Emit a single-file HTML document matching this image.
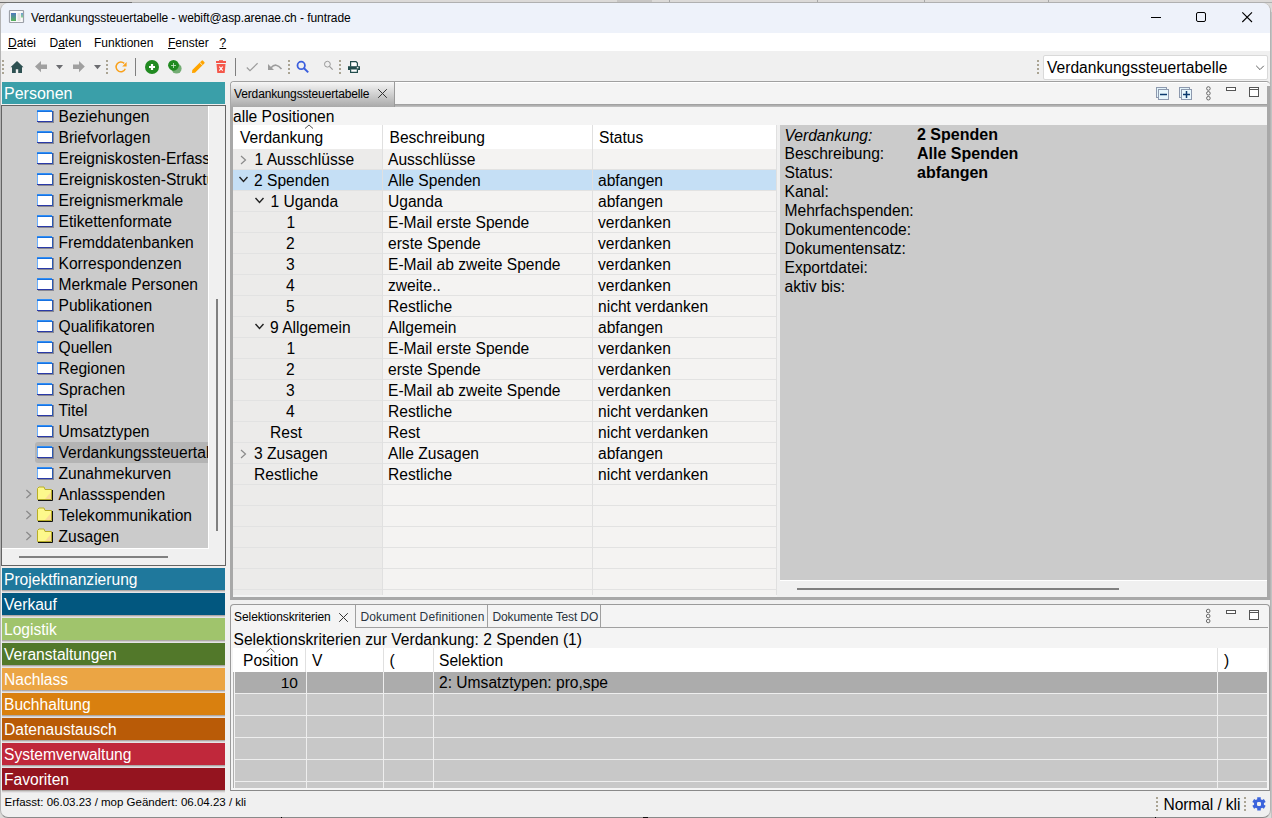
<!DOCTYPE html><html><head><meta charset="utf-8"><title>funtrade</title><style>
*{margin:0;padding:0;box-sizing:border-box}
html,body{width:1272px;height:818px;overflow:hidden;background:#dcdad8;font-family:"Liberation Sans",sans-serif;color:#000}
div,svg{position:absolute}
.t{white-space:pre}
</style></head><body>
<div style="left:0px;top:2px;width:132px;height:1px;background:#707070"></div>
<div style="left:132px;top:2px;width:1140px;height:1px;background:#b0b0b0"></div>
<div style="left:617px;top:0px;width:35px;height:2px;background:#c8c6c4"></div>
<div style="left:669px;top:0px;width:1px;height:2px;background:#a8a8a8"></div>
<div style="left:817px;top:0px;width:1px;height:2px;background:#a8a8a8"></div>
<div style="left:924px;top:0px;width:1px;height:2px;background:#a8a8a8"></div>
<div style="left:1048px;top:0px;width:1px;height:2px;background:#a8a8a8"></div>
<div style="left:0px;top:3px;width:1271px;height:815px;background:#f0f0f0;border:1px solid #b4b4b4;border-bottom-color:#8a8a8a;border-top:0;border-radius:8px;overflow:hidden"></div>
<div style="left:1271px;top:12px;width:1px;height:806px;background:#c2c2c2"></div>
<div style="left:281px;top:817px;width:1px;height:1px;background:#000"></div>
<div style="left:643px;top:817px;width:5px;height:1px;background:#111"></div>
<div style="left:1155px;top:817px;width:1px;height:1px;background:#000"></div>
<div style="left:1px;top:3px;width:1269px;height:30px;background:#eef2fa;border-radius:8px 8px 0 0"></div>
<div style="left:1px;top:33px;width:1269px;height:18px;background:#ffffff"></div>
<div style="left:2px;top:82px;width:223px;height:22px;background:#3a9fa9"></div>
<div style="left:1px;top:105px;width:225px;height:461px;background:#f0f0f0;border:1px solid #646464"></div>
<div style="left:2px;top:106px;width:206px;height:442px;background:#cbcbcb"></div>
<div style="left:208px;top:106px;width:1px;height:443px;background:#ffffff"></div>
<div style="left:2px;top:548px;width:206px;height:1px;background:#ffffff"></div>
<div style="left:216px;top:299px;width:2px;height:232px;background:#808080"></div>
<div style="left:19px;top:556px;width:149px;height:2px;background:#808080"></div>
<div style="left:2px;top:566px;width:223px;height:225px;background:#f2eeec"></div>
<div style="left:2px;top:568px;width:223px;height:22px;background:#1f789c"></div>
<div style="left:2px;top:590px;width:223px;height:1px;background:#afa9a7"></div>
<div style="left:2px;top:591px;width:223px;height:1px;background:#d0cecd"></div>
<div style="left:2px;top:592px;width:223px;height:1px;background:#e5e3e6"></div>
<div style="left:2px;top:593px;width:223px;height:22px;background:#02577f"></div>
<div style="left:2px;top:615px;width:223px;height:1px;background:#afa9a7"></div>
<div style="left:2px;top:616px;width:223px;height:1px;background:#d0cecd"></div>
<div style="left:2px;top:617px;width:223px;height:1px;background:#e5e3e6"></div>
<div style="left:2px;top:618px;width:223px;height:22px;background:#a0c46c"></div>
<div style="left:2px;top:640px;width:223px;height:1px;background:#afa9a7"></div>
<div style="left:2px;top:641px;width:223px;height:1px;background:#d0cecd"></div>
<div style="left:2px;top:642px;width:223px;height:1px;background:#e5e3e6"></div>
<div style="left:2px;top:643px;width:223px;height:22px;background:#52782a"></div>
<div style="left:2px;top:665px;width:223px;height:1px;background:#afa9a7"></div>
<div style="left:2px;top:666px;width:223px;height:1px;background:#d0cecd"></div>
<div style="left:2px;top:667px;width:223px;height:1px;background:#e5e3e6"></div>
<div style="left:2px;top:668px;width:223px;height:22px;background:#eba544"></div>
<div style="left:2px;top:690px;width:223px;height:1px;background:#afa9a7"></div>
<div style="left:2px;top:691px;width:223px;height:1px;background:#d0cecd"></div>
<div style="left:2px;top:692px;width:223px;height:1px;background:#e5e3e6"></div>
<div style="left:2px;top:693px;width:223px;height:22px;background:#d9800f"></div>
<div style="left:2px;top:715px;width:223px;height:1px;background:#afa9a7"></div>
<div style="left:2px;top:716px;width:223px;height:1px;background:#d0cecd"></div>
<div style="left:2px;top:717px;width:223px;height:1px;background:#e5e3e6"></div>
<div style="left:2px;top:718px;width:223px;height:22px;background:#b95b07"></div>
<div style="left:2px;top:740px;width:223px;height:1px;background:#afa9a7"></div>
<div style="left:2px;top:741px;width:223px;height:1px;background:#d0cecd"></div>
<div style="left:2px;top:742px;width:223px;height:1px;background:#e5e3e6"></div>
<div style="left:2px;top:743px;width:223px;height:22px;background:#c0283b"></div>
<div style="left:2px;top:765px;width:223px;height:1px;background:#afa9a7"></div>
<div style="left:2px;top:766px;width:223px;height:1px;background:#d0cecd"></div>
<div style="left:2px;top:767px;width:223px;height:1px;background:#e5e3e6"></div>
<div style="left:2px;top:768px;width:223px;height:22px;background:#94141f"></div>
<div style="left:2px;top:790px;width:223px;height:1px;background:#afa9a7"></div>
<div style="left:2px;top:791px;width:223px;height:1px;background:#d0cecd"></div>
<div style="left:2px;top:792px;width:223px;height:1px;background:#e5e3e6"></div>
<div style="left:230px;top:81px;width:1040px;height:519px;background:#f4f4f4;border-top:1px solid #a0a0a0;border-left:1px solid #a0a0a0;border-radius:4px 4px 0 0"></div>
<div style="left:230px;top:86px;width:3px;height:514px;background:#a8a8a8"></div>
<div style="left:1267px;top:86px;width:3px;height:514px;background:#a8a8a8"></div>
<div style="left:230px;top:597px;width:1040px;height:3px;background:#a8a8a8"></div>
<div style="left:233px;top:82px;width:1034px;height:1px;background:#ffffff"></div>
<div style="left:394px;top:104px;width:873px;height:3px;background:linear-gradient(#9a9a9a,#c4c4c4)"></div>
<div style="left:231px;top:82px;width:164px;height:25px;background:linear-gradient(#f6f6f6,#a9a9a9);border-right:1px solid #9a9a9a;border-radius:3px 0 0 0"></div>
<div style="left:233px;top:125px;width:543px;height:24px;background:#ffffff"></div>
<div style="left:233px;top:149px;width:149px;height:446px;background:#ecebea"></div>
<div style="left:383px;top:149px;width:393px;height:446px;background:#f4f3f2"></div>
<div style="left:233px;top:170px;width:543px;height:20px;background:#c5dff5"></div>
<div style="left:233px;top:169px;width:543px;height:1px;background:#e2e2e2"></div>
<div style="left:233px;top:190px;width:543px;height:1px;background:#e2e2e2"></div>
<div style="left:233px;top:211px;width:543px;height:1px;background:#e2e2e2"></div>
<div style="left:233px;top:232px;width:543px;height:1px;background:#e2e2e2"></div>
<div style="left:233px;top:253px;width:543px;height:1px;background:#e2e2e2"></div>
<div style="left:233px;top:274px;width:543px;height:1px;background:#e2e2e2"></div>
<div style="left:233px;top:295px;width:543px;height:1px;background:#e2e2e2"></div>
<div style="left:233px;top:316px;width:543px;height:1px;background:#e2e2e2"></div>
<div style="left:233px;top:337px;width:543px;height:1px;background:#e2e2e2"></div>
<div style="left:233px;top:358px;width:543px;height:1px;background:#e2e2e2"></div>
<div style="left:233px;top:379px;width:543px;height:1px;background:#e2e2e2"></div>
<div style="left:233px;top:400px;width:543px;height:1px;background:#e2e2e2"></div>
<div style="left:233px;top:421px;width:543px;height:1px;background:#e2e2e2"></div>
<div style="left:233px;top:442px;width:543px;height:1px;background:#e2e2e2"></div>
<div style="left:233px;top:463px;width:543px;height:1px;background:#e2e2e2"></div>
<div style="left:233px;top:484px;width:543px;height:1px;background:#e2e2e2"></div>
<div style="left:233px;top:505px;width:543px;height:1px;background:#e2e2e2"></div>
<div style="left:233px;top:526px;width:543px;height:1px;background:#e2e2e2"></div>
<div style="left:233px;top:547px;width:543px;height:1px;background:#e2e2e2"></div>
<div style="left:233px;top:568px;width:543px;height:1px;background:#e2e2e2"></div>
<div style="left:233px;top:589px;width:543px;height:1px;background:#e2e2e2"></div>
<div style="left:382px;top:125px;width:1px;height:470px;background:#e0e0e0"></div>
<div style="left:592px;top:125px;width:1px;height:470px;background:#e0e0e0"></div>
<div style="left:776px;top:125px;width:1px;height:470px;background:#e0e0e0"></div>
<div style="left:780px;top:125px;width:487px;height:455px;background:#cbcbcb"></div>
<div style="left:777px;top:125px;width:3px;height:472px;background:#f0f0f0"></div>
<div style="left:777px;top:581px;width:490px;height:16px;background:#f0f0f0"></div>
<div style="left:780px;top:580px;width:487px;height:1px;background:#ffffff"></div>
<div style="left:797px;top:588px;width:322px;height:2px;background:#808080"></div>
<div style="left:230px;top:604px;width:1040px;height:187px;background:#f4f4f4;border:1px solid #9a9a9a;border-bottom:1px solid #8a8a8a;border-radius:4px 4px 0 0"></div>
<div style="left:355px;top:627px;width:913px;height:1px;background:#a0a0a0"></div>
<div style="left:355px;top:605px;width:1px;height:22px;background:#a0a0a0"></div>
<div style="left:487px;top:605px;width:1px;height:22px;background:#a0a0a0"></div>
<div style="left:600px;top:605px;width:1px;height:22px;background:#a0a0a0"></div>
<div style="left:233px;top:648px;width:1034px;height:24px;background:#ffffff"></div>
<div style="left:305px;top:648px;width:1px;height:24px;background:#e0e0e0"></div>
<div style="left:383px;top:648px;width:1px;height:24px;background:#e0e0e0"></div>
<div style="left:433px;top:648px;width:1px;height:24px;background:#e0e0e0"></div>
<div style="left:1217px;top:648px;width:1px;height:24px;background:#e0e0e0"></div>
<div style="left:233px;top:672px;width:1px;height:116px;background:#b0b0b0"></div>
<div style="left:235px;top:672px;width:1032px;height:116px;background:#c8c8c8"></div>
<div style="left:235px;top:672px;width:1032px;height:21px;background:#acacac"></div>
<div style="left:235px;top:693px;width:1032px;height:1px;background:#eeeeee"></div>
<div style="left:235px;top:715px;width:1032px;height:1px;background:#eeeeee"></div>
<div style="left:235px;top:737px;width:1032px;height:1px;background:#eeeeee"></div>
<div style="left:235px;top:759px;width:1032px;height:1px;background:#eeeeee"></div>
<div style="left:235px;top:781px;width:1032px;height:1px;background:#eeeeee"></div>
<div style="left:306px;top:672px;width:1px;height:116px;background:#eeeeee"></div>
<div style="left:383px;top:672px;width:1px;height:116px;background:#eeeeee"></div>
<div style="left:433px;top:672px;width:1px;height:116px;background:#eeeeee"></div>
<div style="left:1217px;top:672px;width:1px;height:116px;background:#eeeeee"></div>
<div class="t" style="left:31px;top:12px;font-size:12px;line-height:12px;letter-spacing:-0.07px">Verdankungssteuertabelle - webift@asp.arenae.ch - funtrade</div>
<div class="t" style="left:8px;top:37px;font-size:12px;line-height:12px;"><u>D</u>atei</div>
<div class="t" style="left:49.5px;top:37px;font-size:12px;line-height:12px;">D<u>a</u>ten</div>
<div class="t" style="left:94px;top:37px;font-size:12px;line-height:12px;">Funktionen</div>
<div class="t" style="left:168px;top:37px;font-size:12px;line-height:12px;"><u>F</u>enster</div>
<div class="t" style="left:219.5px;top:37px;font-size:12px;line-height:12px;"><u>?</u></div>
<div style="left:1043px;top:55px;width:225px;height:25px;background:#fff;border:1px solid #d9d9d9;border-radius:2px"></div>
<div class="t" style="left:1047px;top:60px;font-size:15.6px;line-height:15.6px;">Verdankungssteuertabelle</div>
<div class="t" style="left:4px;top:86px;font-size:16px;line-height:16px;color:#fff">Personen</div>
<div style="left:2px;top:106px;width:206px;height:442px;overflow:hidden">
<div style="left:33px;top:336px;width:180px;height:21px;background:#b4b4b4;border-radius:3px"></div>
<div class="t" style="left:56.5px;top:3px;font-size:15.6px;line-height:15.6px;">Beziehungen</div>
<div class="t" style="left:56.5px;top:24px;font-size:15.6px;line-height:15.6px;">Briefvorlagen</div>
<div class="t" style="left:56.5px;top:45px;font-size:15.6px;line-height:15.6px;">Ereigniskosten-Erfassung</div>
<div class="t" style="left:56.5px;top:66px;font-size:15.6px;line-height:15.6px;">Ereigniskosten-Struktur</div>
<div class="t" style="left:56.5px;top:87px;font-size:15.6px;line-height:15.6px;">Ereignismerkmale</div>
<div class="t" style="left:56.5px;top:108px;font-size:15.6px;line-height:15.6px;">Etikettenformate</div>
<div class="t" style="left:56.5px;top:129px;font-size:15.6px;line-height:15.6px;">Fremddatenbanken</div>
<div class="t" style="left:56.5px;top:150px;font-size:15.6px;line-height:15.6px;">Korrespondenzen</div>
<div class="t" style="left:56.5px;top:171px;font-size:15.6px;line-height:15.6px;">Merkmale Personen</div>
<div class="t" style="left:56.5px;top:192px;font-size:15.6px;line-height:15.6px;">Publikationen</div>
<div class="t" style="left:56.5px;top:213px;font-size:15.6px;line-height:15.6px;">Qualifikatoren</div>
<div class="t" style="left:56.5px;top:234px;font-size:15.6px;line-height:15.6px;">Quellen</div>
<div class="t" style="left:56.5px;top:255px;font-size:15.6px;line-height:15.6px;">Regionen</div>
<div class="t" style="left:56.5px;top:276px;font-size:15.6px;line-height:15.6px;">Sprachen</div>
<div class="t" style="left:56.5px;top:297px;font-size:15.6px;line-height:15.6px;">Titel</div>
<div class="t" style="left:56.5px;top:318px;font-size:15.6px;line-height:15.6px;">Umsatztypen</div>
<div class="t" style="left:56.5px;top:339px;font-size:15.6px;line-height:15.6px;">Verdankungssteuertabelle</div>
<div class="t" style="left:56.5px;top:360px;font-size:15.6px;line-height:15.6px;">Zunahmekurven</div>
<div class="t" style="left:56.5px;top:381px;font-size:15.6px;line-height:15.6px;">Anlassspenden</div>
<div class="t" style="left:56.5px;top:402px;font-size:15.6px;line-height:15.6px;">Telekommunikation</div>
<div class="t" style="left:56.5px;top:423px;font-size:15.6px;line-height:15.6px;">Zusagen</div>
</div>
<div class="t" style="left:4px;top:572px;font-size:15.6px;line-height:15.6px;color:#fff">Projektfinanzierung</div>
<div class="t" style="left:4px;top:597px;font-size:15.6px;line-height:15.6px;color:#fff">Verkauf</div>
<div class="t" style="left:4px;top:622px;font-size:15.6px;line-height:15.6px;color:#fff">Logistik</div>
<div class="t" style="left:4px;top:647px;font-size:15.6px;line-height:15.6px;color:#fff">Veranstaltungen</div>
<div class="t" style="left:4px;top:672px;font-size:15.6px;line-height:15.6px;color:#fff">Nachlass</div>
<div class="t" style="left:4px;top:697px;font-size:15.6px;line-height:15.6px;color:#fff">Buchhaltung</div>
<div class="t" style="left:4px;top:722px;font-size:15.6px;line-height:15.6px;color:#fff">Datenaustausch</div>
<div class="t" style="left:4px;top:747px;font-size:15.6px;line-height:15.6px;color:#fff">Systemverwaltung</div>
<div class="t" style="left:4px;top:772px;font-size:15.6px;line-height:15.6px;color:#fff">Favoriten</div>
<div class="t" style="left:234px;top:88px;font-size:12px;line-height:12px;letter-spacing:-0.14px">Verdankungssteuertabelle</div>
<div class="t" style="left:233px;top:109px;font-size:15.6px;line-height:15.6px;">alle Positionen</div>
<div class="t" style="left:240px;top:130px;font-size:15.6px;line-height:15.6px;">Verdankung</div>
<div class="t" style="left:389.5px;top:130px;font-size:15.6px;line-height:15.6px;">Beschreibung</div>
<div class="t" style="left:599px;top:130px;font-size:15.6px;line-height:15.6px;">Status</div>
<div class="t" style="left:254.5px;top:152px;font-size:15.6px;line-height:15.6px;">1 Ausschlüsse</div>
<div class="t" style="left:388px;top:152px;font-size:15.6px;line-height:15.6px;">Ausschlüsse</div>
<div class="t" style="left:254px;top:173px;font-size:15.6px;line-height:15.6px;">2 Spenden</div>
<div class="t" style="left:388px;top:173px;font-size:15.6px;line-height:15.6px;">Alle Spenden</div>
<div class="t" style="left:598px;top:173px;font-size:15.6px;line-height:15.6px;">abfangen</div>
<div class="t" style="left:270.5px;top:194px;font-size:15.6px;line-height:15.6px;">1 Uganda</div>
<div class="t" style="left:388px;top:194px;font-size:15.6px;line-height:15.6px;">Uganda</div>
<div class="t" style="left:598px;top:194px;font-size:15.6px;line-height:15.6px;">abfangen</div>
<div class="t" style="left:286.5px;top:215px;font-size:15.6px;line-height:15.6px;">1</div>
<div class="t" style="left:388px;top:215px;font-size:15.6px;line-height:15.6px;">E-Mail erste Spende</div>
<div class="t" style="left:598px;top:215px;font-size:15.6px;line-height:15.6px;">verdanken</div>
<div class="t" style="left:286px;top:236px;font-size:15.6px;line-height:15.6px;">2</div>
<div class="t" style="left:388px;top:236px;font-size:15.6px;line-height:15.6px;">erste Spende</div>
<div class="t" style="left:598px;top:236px;font-size:15.6px;line-height:15.6px;">verdanken</div>
<div class="t" style="left:286px;top:257px;font-size:15.6px;line-height:15.6px;">3</div>
<div class="t" style="left:388px;top:257px;font-size:15.6px;line-height:15.6px;">E-Mail ab zweite Spende</div>
<div class="t" style="left:598px;top:257px;font-size:15.6px;line-height:15.6px;">verdanken</div>
<div class="t" style="left:286px;top:278px;font-size:15.6px;line-height:15.6px;">4</div>
<div class="t" style="left:388px;top:278px;font-size:15.6px;line-height:15.6px;">zweite..</div>
<div class="t" style="left:598px;top:278px;font-size:15.6px;line-height:15.6px;">verdanken</div>
<div class="t" style="left:286px;top:299px;font-size:15.6px;line-height:15.6px;">5</div>
<div class="t" style="left:388px;top:299px;font-size:15.6px;line-height:15.6px;">Restliche</div>
<div class="t" style="left:598px;top:299px;font-size:15.6px;line-height:15.6px;">nicht verdanken</div>
<div class="t" style="left:270px;top:320px;font-size:15.6px;line-height:15.6px;">9 Allgemein</div>
<div class="t" style="left:388px;top:320px;font-size:15.6px;line-height:15.6px;">Allgemein</div>
<div class="t" style="left:598px;top:320px;font-size:15.6px;line-height:15.6px;">abfangen</div>
<div class="t" style="left:286.5px;top:341px;font-size:15.6px;line-height:15.6px;">1</div>
<div class="t" style="left:388px;top:341px;font-size:15.6px;line-height:15.6px;">E-Mail erste Spende</div>
<div class="t" style="left:598px;top:341px;font-size:15.6px;line-height:15.6px;">verdanken</div>
<div class="t" style="left:286px;top:362px;font-size:15.6px;line-height:15.6px;">2</div>
<div class="t" style="left:388px;top:362px;font-size:15.6px;line-height:15.6px;">erste Spende</div>
<div class="t" style="left:598px;top:362px;font-size:15.6px;line-height:15.6px;">verdanken</div>
<div class="t" style="left:286px;top:383px;font-size:15.6px;line-height:15.6px;">3</div>
<div class="t" style="left:388px;top:383px;font-size:15.6px;line-height:15.6px;">E-Mail ab zweite Spende</div>
<div class="t" style="left:598px;top:383px;font-size:15.6px;line-height:15.6px;">verdanken</div>
<div class="t" style="left:286px;top:404px;font-size:15.6px;line-height:15.6px;">4</div>
<div class="t" style="left:388px;top:404px;font-size:15.6px;line-height:15.6px;">Restliche</div>
<div class="t" style="left:598px;top:404px;font-size:15.6px;line-height:15.6px;">nicht verdanken</div>
<div class="t" style="left:270px;top:425px;font-size:15.6px;line-height:15.6px;">Rest</div>
<div class="t" style="left:388px;top:425px;font-size:15.6px;line-height:15.6px;">Rest</div>
<div class="t" style="left:598px;top:425px;font-size:15.6px;line-height:15.6px;">nicht verdanken</div>
<div class="t" style="left:254px;top:446px;font-size:15.6px;line-height:15.6px;">3 Zusagen</div>
<div class="t" style="left:388px;top:446px;font-size:15.6px;line-height:15.6px;">Alle Zusagen</div>
<div class="t" style="left:598px;top:446px;font-size:15.6px;line-height:15.6px;">abfangen</div>
<div class="t" style="left:254px;top:467px;font-size:15.6px;line-height:15.6px;">Restliche</div>
<div class="t" style="left:388px;top:467px;font-size:15.6px;line-height:15.6px;">Restliche</div>
<div class="t" style="left:598px;top:467px;font-size:15.6px;line-height:15.6px;">nicht verdanken</div>
<div class="t" style="left:784.5px;top:128px;font-size:15.6px;line-height:15.6px;font-style:italic">Verdankung:</div>
<div class="t" style="left:784.5px;top:146px;font-size:15.6px;line-height:15.6px;">Beschreibung:</div>
<div class="t" style="left:784.5px;top:165px;font-size:15.6px;line-height:15.6px;">Status:</div>
<div class="t" style="left:784.5px;top:184px;font-size:15.6px;line-height:15.6px;">Kanal:</div>
<div class="t" style="left:784.5px;top:203px;font-size:15.6px;line-height:15.6px;">Mehrfachspenden:</div>
<div class="t" style="left:784.5px;top:222px;font-size:15.6px;line-height:15.6px;">Dokumentencode:</div>
<div class="t" style="left:784.5px;top:241px;font-size:15.6px;line-height:15.6px;">Dokumentensatz:</div>
<div class="t" style="left:784.5px;top:260px;font-size:15.6px;line-height:15.6px;">Exportdatei:</div>
<div class="t" style="left:784.5px;top:279px;font-size:15.6px;line-height:15.6px;">aktiv bis:</div>
<div class="t" style="left:917px;top:127px;font-size:16px;line-height:16px;font-weight:bold">2 Spenden</div>
<div class="t" style="left:917px;top:146px;font-size:16px;line-height:16px;font-weight:bold">Alle Spenden</div>
<div class="t" style="left:917px;top:165px;font-size:16px;line-height:16px;font-weight:bold">abfangen</div>
<div class="t" style="left:234px;top:611px;font-size:12px;line-height:12px;letter-spacing:-0.07px">Selektionskriterien</div>
<div class="t" style="left:360.5px;top:611px;font-size:12px;line-height:12px;color:#2a3440;letter-spacing:0.12px">Dokument Definitionen</div>
<div class="t" style="left:492.5px;top:611px;font-size:12px;line-height:12px;color:#2a3440;letter-spacing:-0.13px">Dokumente Test DO</div>
<div class="t" style="left:233.5px;top:632px;font-size:15.6px;line-height:15.6px;">Selektionskriterien zur Verdankung: 2 Spenden (1)</div>
<div class="t" style="left:243px;top:653px;font-size:15.6px;line-height:15.6px;">Position</div>
<div class="t" style="left:312px;top:653px;font-size:15.6px;line-height:15.6px;">V</div>
<div class="t" style="left:389.5px;top:653px;font-size:15.6px;line-height:15.6px;">(</div>
<div class="t" style="left:439px;top:653px;font-size:15.6px;line-height:15.6px;">Selektion</div>
<div class="t" style="left:1224px;top:653px;font-size:15.6px;line-height:15.6px;">)</div>
<div class="t" style="left:234px;top:675px;width:64px;text-align:right;font-size:15.5px;line-height:15.5px">10</div>
<div class="t" style="left:439px;top:675px;font-size:15.6px;line-height:15.6px;">2: Umsatztypen: pro,spe</div>
<div class="t" style="left:4.5px;top:797px;font-size:11.5px;line-height:11.5px;">Erfasst: 06.03.23 / mop Geändert: 06.04.23 / kli</div>
<div class="t" style="left:1163.5px;top:797px;font-size:15.6px;line-height:15.6px;letter-spacing:-0.1px">Normal / kli</div>
<svg style="left:0;top:0" width="1272" height="818" viewBox="0 0 1272 818"><defs><linearGradient id="gA" x1="0" y1="0" x2="0" y2="1"><stop offset="0" stop-color="#4f78c0"/><stop offset="1" stop-color="#57b45a"/></linearGradient><linearGradient id="gB" x1="0" y1="0" x2="0" y2="1"><stop offset="0" stop-color="#6f9ad8"/><stop offset="1" stop-color="#8ad68a"/></linearGradient><linearGradient id="gT" x1="0" y1="0" x2="0" y2="1"><stop offset="0" stop-color="#3d9dff"/><stop offset="1" stop-color="#0a62d6"/></linearGradient></defs><rect x="9.5" y="10.5" width="14" height="12" fill="#fafafa" stroke="#9ca0a8" stroke-width="1.2" rx="0.5"/><rect x="11" y="13" width="5" height="8" fill="url(#gA)"/><rect x="17.5" y="13" width="3" height="8" fill="#e2e2e2"/><rect x="21" y="13" width="2" height="4.5" fill="url(#gB)"/><rect x="1151" y="17" width="10" height="1" fill="#000"/><rect x="1196.5" y="12.5" width="9" height="9" rx="1.5" fill="none" stroke="#000" stroke-width="1"/><path d="M1242.3 12.3 L1252 22 M1252 12.3 L1242.3 22" stroke="#000" stroke-width="1.1" fill="none"/><rect x="2" y="60" width="2" height="2" fill="#aaa493"/><rect x="2" y="64" width="2" height="2" fill="#aaa493"/><rect x="2" y="68" width="2" height="2" fill="#aaa493"/><rect x="2" y="72" width="2" height="2" fill="#aaa493"/><rect x="106" y="60" width="2" height="2" fill="#aaa493"/><rect x="106" y="64" width="2" height="2" fill="#aaa493"/><rect x="106" y="68" width="2" height="2" fill="#aaa493"/><rect x="106" y="72" width="2" height="2" fill="#aaa493"/><rect x="288" y="60" width="2" height="2" fill="#aaa493"/><rect x="288" y="64" width="2" height="2" fill="#aaa493"/><rect x="288" y="68" width="2" height="2" fill="#aaa493"/><rect x="288" y="72" width="2" height="2" fill="#aaa493"/><rect x="339" y="60" width="2" height="2" fill="#aaa493"/><rect x="339" y="64" width="2" height="2" fill="#aaa493"/><rect x="339" y="68" width="2" height="2" fill="#aaa493"/><rect x="339" y="72" width="2" height="2" fill="#aaa493"/><rect x="1037" y="60" width="2" height="2" fill="#aaa493"/><rect x="1037" y="64" width="2" height="2" fill="#aaa493"/><rect x="1037" y="68" width="2" height="2" fill="#aaa493"/><rect x="1037" y="72" width="2" height="2" fill="#aaa493"/><path d="M17 61 L23.5 67.3 L22 67.3 L22 73 L18.2 73 L18.2 69.2 L15.8 69.2 L15.8 73 L12 73 L12 67.3 L10.5 67.3 Z" fill="#2e5152"/><path d="M35 66.6 L41 61 L41 64.6 L47 64.6 L47 68.9 L41 68.9 L41 72.2 Z" fill="#a0a0a0"/><path d="M56 65 L63 65 L59.5 69.2 Z" fill="#6b6c70"/><path d="M84.8 66.6 L79 61 L79 64.6 L73 64.6 L73 68.9 L79 68.9 L79 72.2 Z" fill="#a0a0a0"/><path d="M94 65 L101 65 L97.5 69.2 Z" fill="#6b6c70"/><path d="M125.3 68.8 A4.8 4.8 0 1 1 124.2 63.4" fill="none" stroke="#f9a11b" stroke-width="1.5"/><path d="M126.6 62 L126.6 66.5 L122.2 66.5 Z" fill="#f9a11b"/><rect x="135" y="58" width="1" height="18" fill="#7f7f7f"/><rect x="235" y="58" width="1" height="18" fill="#7f7f7f"/><circle cx="152" cy="67" r="7" fill="#218a21"/><path d="M149 67 L155 67 M152 64 L152 70" stroke="#fff" stroke-width="2.2"/><circle cx="176.6" cy="68.6" r="5" fill="#74ad74"/><circle cx="173.5" cy="65.3" r="5.4" fill="#218a21"/><path d="M171 65.5 L176 65.5 M173.5 63 L173.5 68" stroke="#d0e8d0" stroke-width="0.8"/><path d="M192 73 L192.3 70 L201.6 60.7 Q202.3 60 203 60.7 L204.3 62 Q205 62.7 204.3 63.4 L195 72.7 Z" fill="#ffa500"/><path d="M199.8 62.5 L202.5 65.2" stroke="#f0f0f0" stroke-width="0.9"/><rect x="216" y="61" width="10" height="2" fill="#f4574a"/><rect x="219" y="60" width="4" height="1" fill="#f4574a" opacity="0.8"/><path d="M216.5 64 L225.5 64 L224.7 73 L217.3 73 Z" fill="#f4574a"/><path d="M219.3 66.7 L222.7 70.6 M222.7 66.7 L219.3 70.6" stroke="#fff" stroke-width="1.1"/><path d="M246.8 67.5 L250 70.6 L257.6 63.3" fill="none" stroke="#9c9c9c" stroke-width="1.2"/><path d="M271 67.8 Q276 62 281.5 69" fill="none" stroke="#9c9c9c" stroke-width="1.6"/><path d="M268 64 L268 70 L274 70 Z" fill="#9c9c9c"/><circle cx="301.2" cy="65.4" r="3.7" fill="none" stroke="#3b5fde" stroke-width="1.8"/><path d="M303.8 68 L308.2 72.4" stroke="#3b5fde" stroke-width="2"/><circle cx="327.4" cy="64.2" r="2.9" fill="none" stroke="#9a9a9a" stroke-width="1"/><path d="M329.5 66.4 L332.7 69.6" stroke="#9a9a9a" stroke-width="1.2"/><path d="M350.6 66.5 L350.6 61.6 L356 61.6 L357.4 63 L357.4 66.5" fill="#fff" stroke="#234d4d" stroke-width="1.2"/><path d="M348 66.2 L360 66.2 L360 70 L348 70 Z" fill="#234d4d"/><rect x="356.8" y="67" width="1.6" height="1.4" fill="#dfe8e8"/><path d="M350.6 69.5 L350.6 72.4 L357.4 72.4 L357.4 69.5" fill="#fff" stroke="#234d4d" stroke-width="1.2"/><path d="M1256.2 65.8 L1260 69.6 L1263.8 65.8" fill="none" stroke="#606060" stroke-width="1"/><rect x="1156.5" y="87.5" width="10" height="10" fill="#e3f4fb" stroke="#8d99ae" stroke-width="1"/><rect x="1158.5" y="89.5" width="10" height="10" fill="#e8f7fd" stroke="#8d99ae" stroke-width="1"/><path d="M1160 94.5 L1167 94.5" stroke="#0b3b6f" stroke-width="1.5"/><rect x="1179.5" y="87.5" width="10" height="10" fill="#e3f4fb" stroke="#8d99ae" stroke-width="1"/><rect x="1181.5" y="89.5" width="10" height="10" fill="#e8f7fd" stroke="#8d99ae" stroke-width="1"/><path d="M1183 94.5 L1190 94.5" stroke="#0b3b6f" stroke-width="1.5"/><path d="M1186.5 91 L1186.5 98" stroke="#0b3b6f" stroke-width="1.5"/><circle cx="1208.4" cy="88.5" r="1.8" fill="none" stroke="#5a5a5a" stroke-width="0.9"/><circle cx="1208.4" cy="93.3" r="1.8" fill="none" stroke="#5a5a5a" stroke-width="0.9"/><circle cx="1208.4" cy="98.2" r="1.8" fill="none" stroke="#5a5a5a" stroke-width="0.9"/><rect x="1226.5" y="87.5" width="9" height="3" fill="#fff" stroke="#555" stroke-width="1"/><rect x="1249.5" y="87.5" width="9" height="9" fill="#fff" stroke="#555" stroke-width="1"/><path d="M1249.5 89.5 L1258.5 89.5" stroke="#555" stroke-width="1"/><path d="M378.2 89.2 L386.8 97.8 M386.8 89.2 L378.2 97.8" stroke="#333" stroke-width="1"/><circle cx="1208.2" cy="611" r="1.8" fill="none" stroke="#5a5a5a" stroke-width="0.9"/><circle cx="1208.2" cy="616" r="1.8" fill="none" stroke="#5a5a5a" stroke-width="0.9"/><circle cx="1208.2" cy="621" r="1.8" fill="none" stroke="#5a5a5a" stroke-width="0.9"/><rect x="1226.5" y="610.5" width="9" height="3" fill="#fff" stroke="#555" stroke-width="1"/><rect x="1249.5" y="610.5" width="9" height="9" fill="#fff" stroke="#555" stroke-width="1"/><path d="M1249.5 612.5 L1258.5 612.5" stroke="#555" stroke-width="1"/><path d="M339.2 613.2 L347.8 621.8 M347.8 613.2 L339.2 621.8" stroke="#333" stroke-width="1"/><rect x="38" y="112" width="14" height="9" fill="#fff"/><rect x="37" y="110" width="15" height="2" fill="url(#gT)"/><rect x="37" y="112" width="1" height="10" fill="#6ab0ff"/><rect x="37" y="121" width="16" height="1" fill="#2a3aa8"/><rect x="52" y="111" width="1" height="11" fill="#2a5ab0"/><rect x="38" y="122" width="15" height="1" fill="#6a6a7a" opacity="0.7"/><rect x="53" y="111" width="1" height="12" fill="#6a6a7a" opacity="0.7"/><rect x="38" y="133" width="14" height="9" fill="#fff"/><rect x="37" y="131" width="15" height="2" fill="url(#gT)"/><rect x="37" y="133" width="1" height="10" fill="#6ab0ff"/><rect x="37" y="142" width="16" height="1" fill="#2a3aa8"/><rect x="52" y="132" width="1" height="11" fill="#2a5ab0"/><rect x="38" y="143" width="15" height="1" fill="#6a6a7a" opacity="0.7"/><rect x="53" y="132" width="1" height="12" fill="#6a6a7a" opacity="0.7"/><rect x="38" y="154" width="14" height="9" fill="#fff"/><rect x="37" y="152" width="15" height="2" fill="url(#gT)"/><rect x="37" y="154" width="1" height="10" fill="#6ab0ff"/><rect x="37" y="163" width="16" height="1" fill="#2a3aa8"/><rect x="52" y="153" width="1" height="11" fill="#2a5ab0"/><rect x="38" y="164" width="15" height="1" fill="#6a6a7a" opacity="0.7"/><rect x="53" y="153" width="1" height="12" fill="#6a6a7a" opacity="0.7"/><rect x="38" y="175" width="14" height="9" fill="#fff"/><rect x="37" y="173" width="15" height="2" fill="url(#gT)"/><rect x="37" y="175" width="1" height="10" fill="#6ab0ff"/><rect x="37" y="184" width="16" height="1" fill="#2a3aa8"/><rect x="52" y="174" width="1" height="11" fill="#2a5ab0"/><rect x="38" y="185" width="15" height="1" fill="#6a6a7a" opacity="0.7"/><rect x="53" y="174" width="1" height="12" fill="#6a6a7a" opacity="0.7"/><rect x="38" y="196" width="14" height="9" fill="#fff"/><rect x="37" y="194" width="15" height="2" fill="url(#gT)"/><rect x="37" y="196" width="1" height="10" fill="#6ab0ff"/><rect x="37" y="205" width="16" height="1" fill="#2a3aa8"/><rect x="52" y="195" width="1" height="11" fill="#2a5ab0"/><rect x="38" y="206" width="15" height="1" fill="#6a6a7a" opacity="0.7"/><rect x="53" y="195" width="1" height="12" fill="#6a6a7a" opacity="0.7"/><rect x="38" y="217" width="14" height="9" fill="#fff"/><rect x="37" y="215" width="15" height="2" fill="url(#gT)"/><rect x="37" y="217" width="1" height="10" fill="#6ab0ff"/><rect x="37" y="226" width="16" height="1" fill="#2a3aa8"/><rect x="52" y="216" width="1" height="11" fill="#2a5ab0"/><rect x="38" y="227" width="15" height="1" fill="#6a6a7a" opacity="0.7"/><rect x="53" y="216" width="1" height="12" fill="#6a6a7a" opacity="0.7"/><rect x="38" y="238" width="14" height="9" fill="#fff"/><rect x="37" y="236" width="15" height="2" fill="url(#gT)"/><rect x="37" y="238" width="1" height="10" fill="#6ab0ff"/><rect x="37" y="247" width="16" height="1" fill="#2a3aa8"/><rect x="52" y="237" width="1" height="11" fill="#2a5ab0"/><rect x="38" y="248" width="15" height="1" fill="#6a6a7a" opacity="0.7"/><rect x="53" y="237" width="1" height="12" fill="#6a6a7a" opacity="0.7"/><rect x="38" y="259" width="14" height="9" fill="#fff"/><rect x="37" y="257" width="15" height="2" fill="url(#gT)"/><rect x="37" y="259" width="1" height="10" fill="#6ab0ff"/><rect x="37" y="268" width="16" height="1" fill="#2a3aa8"/><rect x="52" y="258" width="1" height="11" fill="#2a5ab0"/><rect x="38" y="269" width="15" height="1" fill="#6a6a7a" opacity="0.7"/><rect x="53" y="258" width="1" height="12" fill="#6a6a7a" opacity="0.7"/><rect x="38" y="280" width="14" height="9" fill="#fff"/><rect x="37" y="278" width="15" height="2" fill="url(#gT)"/><rect x="37" y="280" width="1" height="10" fill="#6ab0ff"/><rect x="37" y="289" width="16" height="1" fill="#2a3aa8"/><rect x="52" y="279" width="1" height="11" fill="#2a5ab0"/><rect x="38" y="290" width="15" height="1" fill="#6a6a7a" opacity="0.7"/><rect x="53" y="279" width="1" height="12" fill="#6a6a7a" opacity="0.7"/><rect x="38" y="301" width="14" height="9" fill="#fff"/><rect x="37" y="299" width="15" height="2" fill="url(#gT)"/><rect x="37" y="301" width="1" height="10" fill="#6ab0ff"/><rect x="37" y="310" width="16" height="1" fill="#2a3aa8"/><rect x="52" y="300" width="1" height="11" fill="#2a5ab0"/><rect x="38" y="311" width="15" height="1" fill="#6a6a7a" opacity="0.7"/><rect x="53" y="300" width="1" height="12" fill="#6a6a7a" opacity="0.7"/><rect x="38" y="322" width="14" height="9" fill="#fff"/><rect x="37" y="320" width="15" height="2" fill="url(#gT)"/><rect x="37" y="322" width="1" height="10" fill="#6ab0ff"/><rect x="37" y="331" width="16" height="1" fill="#2a3aa8"/><rect x="52" y="321" width="1" height="11" fill="#2a5ab0"/><rect x="38" y="332" width="15" height="1" fill="#6a6a7a" opacity="0.7"/><rect x="53" y="321" width="1" height="12" fill="#6a6a7a" opacity="0.7"/><rect x="38" y="343" width="14" height="9" fill="#fff"/><rect x="37" y="341" width="15" height="2" fill="url(#gT)"/><rect x="37" y="343" width="1" height="10" fill="#6ab0ff"/><rect x="37" y="352" width="16" height="1" fill="#2a3aa8"/><rect x="52" y="342" width="1" height="11" fill="#2a5ab0"/><rect x="38" y="353" width="15" height="1" fill="#6a6a7a" opacity="0.7"/><rect x="53" y="342" width="1" height="12" fill="#6a6a7a" opacity="0.7"/><rect x="38" y="364" width="14" height="9" fill="#fff"/><rect x="37" y="362" width="15" height="2" fill="url(#gT)"/><rect x="37" y="364" width="1" height="10" fill="#6ab0ff"/><rect x="37" y="373" width="16" height="1" fill="#2a3aa8"/><rect x="52" y="363" width="1" height="11" fill="#2a5ab0"/><rect x="38" y="374" width="15" height="1" fill="#6a6a7a" opacity="0.7"/><rect x="53" y="363" width="1" height="12" fill="#6a6a7a" opacity="0.7"/><rect x="38" y="385" width="14" height="9" fill="#fff"/><rect x="37" y="383" width="15" height="2" fill="url(#gT)"/><rect x="37" y="385" width="1" height="10" fill="#6ab0ff"/><rect x="37" y="394" width="16" height="1" fill="#2a3aa8"/><rect x="52" y="384" width="1" height="11" fill="#2a5ab0"/><rect x="38" y="395" width="15" height="1" fill="#6a6a7a" opacity="0.7"/><rect x="53" y="384" width="1" height="12" fill="#6a6a7a" opacity="0.7"/><rect x="38" y="406" width="14" height="9" fill="#fff"/><rect x="37" y="404" width="15" height="2" fill="url(#gT)"/><rect x="37" y="406" width="1" height="10" fill="#6ab0ff"/><rect x="37" y="415" width="16" height="1" fill="#2a3aa8"/><rect x="52" y="405" width="1" height="11" fill="#2a5ab0"/><rect x="38" y="416" width="15" height="1" fill="#6a6a7a" opacity="0.7"/><rect x="53" y="405" width="1" height="12" fill="#6a6a7a" opacity="0.7"/><rect x="38" y="427" width="14" height="9" fill="#fff"/><rect x="37" y="425" width="15" height="2" fill="url(#gT)"/><rect x="37" y="427" width="1" height="10" fill="#6ab0ff"/><rect x="37" y="436" width="16" height="1" fill="#2a3aa8"/><rect x="52" y="426" width="1" height="11" fill="#2a5ab0"/><rect x="38" y="437" width="15" height="1" fill="#6a6a7a" opacity="0.7"/><rect x="53" y="426" width="1" height="12" fill="#6a6a7a" opacity="0.7"/><rect x="38" y="448" width="14" height="9" fill="#fff"/><rect x="37" y="446" width="15" height="2" fill="url(#gT)"/><rect x="37" y="448" width="1" height="10" fill="#6ab0ff"/><rect x="37" y="457" width="16" height="1" fill="#2a3aa8"/><rect x="52" y="447" width="1" height="11" fill="#2a5ab0"/><rect x="38" y="458" width="15" height="1" fill="#6a6a7a" opacity="0.7"/><rect x="53" y="447" width="1" height="12" fill="#6a6a7a" opacity="0.7"/><rect x="38" y="469" width="14" height="9" fill="#fff"/><rect x="37" y="467" width="15" height="2" fill="url(#gT)"/><rect x="37" y="469" width="1" height="10" fill="#6ab0ff"/><rect x="37" y="478" width="16" height="1" fill="#2a3aa8"/><rect x="52" y="468" width="1" height="11" fill="#2a5ab0"/><rect x="38" y="479" width="15" height="1" fill="#6a6a7a" opacity="0.7"/><rect x="53" y="468" width="1" height="12" fill="#6a6a7a" opacity="0.7"/><path d="M37.5 488.5 L37.5 499.5 L51.5 499.5 L51.5 489.5 L45 489.5 L44 487 L39 487 Z" fill="#fdf88c" stroke="#b8ae28" stroke-width="1"/><path d="M38 500.5 L52.5 500.5 L52.5 490" fill="none" stroke="#111" stroke-width="1"/><path d="M45 499 L51 492 L51 499 Z" fill="#f8c8a0" opacity="0.6"/><path d="M26.4 490 L30.8 494 L26.4 498" fill="none" stroke="#8a8a8a" stroke-width="1.3"/><path d="M37.5 509.5 L37.5 520.5 L51.5 520.5 L51.5 510.5 L45 510.5 L44 508 L39 508 Z" fill="#fdf88c" stroke="#b8ae28" stroke-width="1"/><path d="M38 521.5 L52.5 521.5 L52.5 511" fill="none" stroke="#111" stroke-width="1"/><path d="M45 520 L51 513 L51 520 Z" fill="#f8c8a0" opacity="0.6"/><path d="M26.4 511 L30.8 515 L26.4 519" fill="none" stroke="#8a8a8a" stroke-width="1.3"/><path d="M37.5 530.5 L37.5 541.5 L51.5 541.5 L51.5 531.5 L45 531.5 L44 529 L39 529 Z" fill="#fdf88c" stroke="#b8ae28" stroke-width="1"/><path d="M38 542.5 L52.5 542.5 L52.5 532" fill="none" stroke="#111" stroke-width="1"/><path d="M45 541 L51 534 L51 541 Z" fill="#f8c8a0" opacity="0.6"/><path d="M26.4 532 L30.8 536 L26.4 540" fill="none" stroke="#8a8a8a" stroke-width="1.3"/><path d="M241 156 L245.5 160 L241 164" fill="none" stroke="#8a8a8a" stroke-width="1.2"/><path d="M239.5 177 L243.5 181.5 L247.5 177" fill="none" stroke="#222" stroke-width="1.4"/><path d="M255.5 198 L259.5 202.5 L263.5 198" fill="none" stroke="#222" stroke-width="1.4"/><path d="M255.5 324 L259.5 328.5 L263.5 324" fill="none" stroke="#222" stroke-width="1.4"/><path d="M241 450 L245.5 454 L241 458" fill="none" stroke="#8a8a8a" stroke-width="1.2"/><path d="M305 128.5 L309 125 L313 128.5" fill="none" stroke="#555" stroke-width="1"/><path d="M266.5 652 L270.5 648.5 L274.5 652" fill="none" stroke="#555" stroke-width="1"/><rect x="1156" y="797" width="2" height="2" fill="#aaa493"/><rect x="1156" y="801" width="2" height="2" fill="#aaa493"/><rect x="1156" y="805" width="2" height="2" fill="#aaa493"/><rect x="1156" y="809" width="2" height="2" fill="#aaa493"/><rect x="1244" y="797" width="2" height="2" fill="#aaa493"/><rect x="1244" y="801" width="2" height="2" fill="#aaa493"/><rect x="1244" y="805" width="2" height="2" fill="#aaa493"/><rect x="1244" y="809" width="2" height="2" fill="#aaa493"/><path d="M1257.24 799.22 L1257.23 797.23 L1260.77 797.23 L1260.76 799.22 L1262.17 800.03 L1263.89 799.03 L1265.66 802.10 L1263.93 803.09 L1263.93 804.71 L1265.66 805.70 L1263.89 808.77 L1262.17 807.77 L1260.76 808.58 L1260.77 810.57 L1257.23 810.57 L1257.24 808.58 L1255.83 807.77 L1254.11 808.77 L1252.34 805.70 L1254.07 804.71 L1254.07 803.09 L1252.34 802.10 L1254.11 799.03 L1255.83 800.03 Z" fill="#3b63dc"/><rect x="1257.0" y="801.9" width="4" height="4" rx="1.2" fill="#f0f0f0"/></svg>
</body></html>
